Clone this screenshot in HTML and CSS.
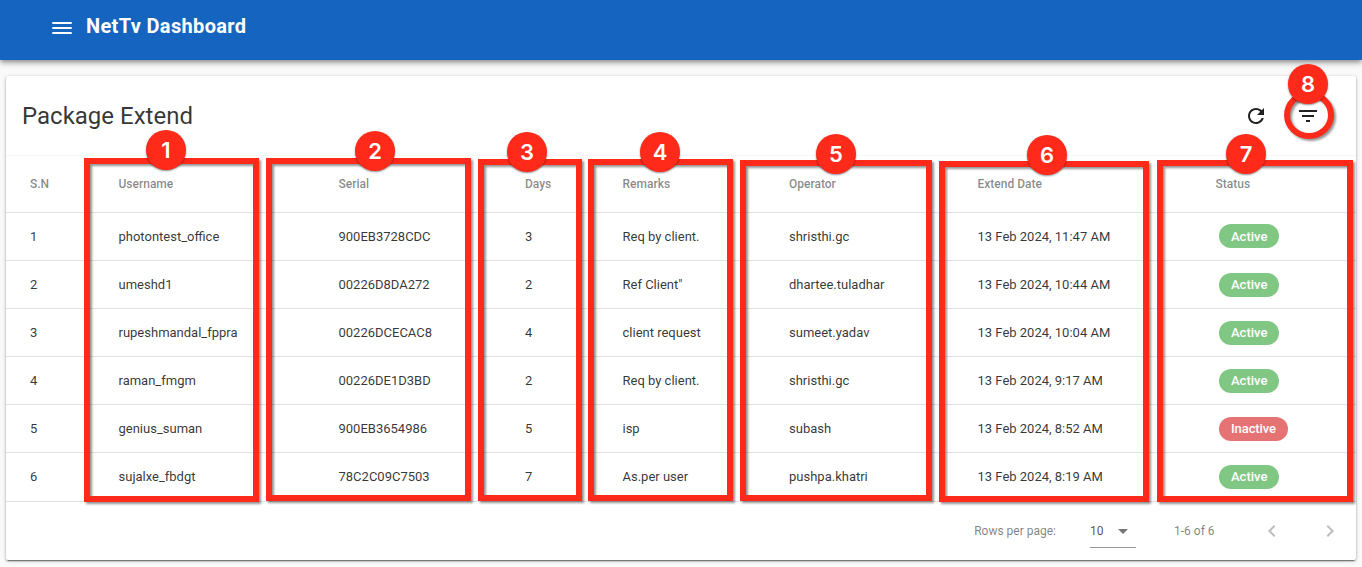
FILE: index.html
```html
<!DOCTYPE html>
<html lang="en">
<head>
<meta charset="utf-8">
<title>NetTv Dashboard</title>
<link rel="stylesheet" href="styles.css">
</head>
<body>
<header class="appbar">
  <svg class="menu" viewBox="0 0 24 24"><path d="M2.3 6h19.4v2H2.3zM2.3 11h19.4v2H2.3zM2.3 16h19.4v2H2.3z"/></svg>
  <h1 class="brand">NetTv Dashboard</h1>
</header>
<main class="card">
  <div class="toolbar">
    <h2 class="title">Package Extend</h2>
    <svg class="icon refresh" viewBox="0 0 24 24"><path d="M17.65 6.35C16.2 4.9 14.21 4 12 4c-4.42 0-7.99 3.58-7.99 8s3.57 8 7.99 8c3.73 0 6.84-2.55 7.73-6h-2.08c-.82 2.33-3.04 4-5.65 4-3.31 0-6-2.69-6-6s2.69-6 6-6c1.66 0 3.14.69 4.22 1.78L13 11h7V4l-2.35 2.35z"/></svg>
    <svg class="icon" viewBox="0 0 24 24"><path d="M10 18h4v-2h-4v2zM3 6v2h18V6H3zm3 7h12v-2H6v2z"/></svg>
  </div>
  <div class="row head"><span>S.N</span><span>Username</span><span>Serial</span><span>Days</span><span>Remarks</span><span>Operator</span><span>Extend Date</span><span>Status</span></div>
  <div class="row"><span>1</span><span>photontest_office</span><span>900EB3728CDC</span><span>3</span><span>Req by client.</span><span>shristhi.gc</span><span>13 Feb 2024, 11:47 AM</span><b class="chip first">Active</b></div>
  <div class="row"><span>2</span><span>umeshd1</span><span>00226D8DA272</span><span>2</span><span>Ref Client"</span><span>dhartee.tuladhar</span><span>13 Feb 2024, 10:44 AM</span><b class="chip">Active</b></div>
  <div class="row"><span>3</span><span>rupeshmandal_fppra</span><span>00226DCECAC8</span><span>4</span><span>client request</span><span>sumeet.yadav</span><span>13 Feb 2024, 10:04 AM</span><b class="chip">Active</b></div>
  <div class="row"><span>4</span><span>raman_fmgm</span><span>00226DE1D3BD</span><span>2</span><span>Req by client.</span><span>shristhi.gc</span><span>13 Feb 2024, 9:17 AM</span><b class="chip">Active</b></div>
  <div class="row"><span>5</span><span>genius_suman</span><span>900EB3654986</span><span>5</span><span>isp</span><span>subash</span><span>13 Feb 2024, 8:52 AM</span><b class="chip off">Inactive</b></div>
  <div class="row last"><span>6</span><span>sujalxe_fbdgt</span><span>78C2C09C7503</span><span>7</span><span>As.per user</span><span>pushpa.khatri</span><span>13 Feb 2024, 8:19 AM</span><b class="chip">Active</b></div>
  <div class="footer">
    <span class="label">Rows per page:</span>
    <div class="select"><span>10</span><svg viewBox="0 0 24 24"><path d="M7 10l5 5 5-5z"/></svg></div>
    <span class="range">1-6 of 6</span>
    <svg class="nav prev" viewBox="0 0 24 24"><path d="M15.41 7.41L14 6l-6 6 6 6 1.41-1.41L10.83 12z"/></svg>
    <svg class="nav" viewBox="0 0 24 24"><path d="M10 6L8.590 7.410 13.170 12l-4.580 4.590L10 18l6-6z"/></svg>
  </div>
</main>
<div class="mark m1"></div><div class="mark m2"></div><div class="mark m3"></div><div class="mark m4"></div><div class="mark m5"></div><div class="mark m6"></div><div class="mark m7"></div><div class="mark ring"></div>
<div class="pin p1">1</div><div class="pin p2">2</div><div class="pin p3">3</div><div class="pin p4">4</div><div class="pin p5">5</div><div class="pin p6">6</div><div class="pin p7">7</div><div class="pin p8">8</div>
</body>
</html>
```
FILE: styles.css
```css
* { box-sizing: border-box; }
body { margin: 0; height: 567px; overflow: hidden; position: relative; background: #fafafa; font-family: Roboto, sans-serif; color: rgba(0,0,0,.8); }
.appbar { height: 60px; background: #1565c0; color: #fff; display: flex; align-items: flex-start; padding-left: 50px; box-shadow: 0 2px 4px -1px rgba(0,0,0,.3), 0 4px 5px rgba(0,0,0,.16), 0 1px 10px rgba(0,0,0,.12); }
.menu { width: 24px; height: 24px; margin-top: 16px; fill: #fff; }
.brand { margin: 14px 0 0 12px; font-size: 20px; line-height: 24px; font-weight: 700; letter-spacing: .35px; }
.card { margin: 16px 6px 0; height: 484px; background: #fff; border-radius: 2px; box-shadow: 0 3px 1px -2px rgba(0,0,0,.3), 0 1px 2px rgba(0,0,0,.35), 0 1px 5px rgba(0,0,0,.14); }
.toolbar { height: 80px; display: flex; align-items: center; padding: 0 36px 0 16px; border-bottom: 1px solid #f6f6f6; }
.title { flex: 1; margin: 0; font-size: 24px; font-weight: 400; line-height: 32px; }
.icon { width: 24px; height: 24px; fill: #212121; }
.refresh { margin-right: 28px; }
.row { display: grid; grid-template-columns: 88.5px 220px 186.500px 97.500px 166.500px 188.500px 241.500px auto; align-items: center; height: 48px; padding-left: 24px; border-bottom: 1px solid #e0e0e0; font-size: 13px; white-space: nowrap; }
.row.last { border-bottom-color: transparent; }
.row.head { height: 57px; font-size: 12px; font-weight: 500; color: rgba(0,0,0,.48); }
.head span:last-child { margin-left: -3.5px; }
.chip { justify-self: start; height: 24px; padding: 0 12px; border-radius: 12px; background: #81c784; color: #fff; font-size: 13px; line-height: 24px; font-weight: 500; }
.chip.first { margin-bottom: 1px; line-height: 26px; }
.chip.off { background: #e57373; letter-spacing: -.1px; }
.footer { height: 59px; border-top: 1px solid #e0e0e0; display: flex; align-items: center; padding-right: 14px; justify-content: flex-end; font-size: 12px; color: rgba(0,0,0,.5); }
.label { margin-right: 34px; }
.select { width: 46px; height: 33px; margin-right: 38px; border-bottom: 1px solid #949494; display: flex; align-items: center; color: rgba(0,0,0,.7); }
.select span { width: 21px; }
.select svg { width: 24px; height: 24px; fill: #757575; }
.range { width: 86px; }
.nav { width: 24px; height: 24px; fill: #bdbdbd; }
.prev { margin-right: 34px; }
.mark { position: absolute; border: 6px solid #ff2a1a; filter: drop-shadow(2px 2px 1px rgba(0,0,0,.42)); }
.m1 { left: 84px; top: 158px; width: 175px; height: 344px; }
.m2 { left: 266px; top: 158px; width: 205px; height: 343px; }
.m3 { left: 478px; top: 159px; width: 104px; height: 342px; }
.m4 { left: 588px; top: 159px; width: 145px; height: 342px; }
.m5 { left: 740px; top: 160px; width: 192px; height: 341px; }
.m6 { left: 939px; top: 161px; width: 210px; height: 341px; }
.m7 { left: 1157px; top: 160px; width: 196px; height: 342px; }
.ring { left: 1284px; top: 91px; width: 50px; height: 48px; border-radius: 50%; }
.pin { position: absolute; width: 40px; height: 40px; border-radius: 50%; background: #ff2a1a; color: #fff; font: 600 22px/41px Inter, sans-serif; text-align: center; box-shadow: 0 1px 2px rgba(0,0,0,.45); }
.p1 { left: 146px; top: 130px; }
.p2 { left: 355px; top: 131px; }
.p3 { left: 507px; top: 132px; }
.p4 { left: 640px; top: 132px; }
.p5 { left: 816px; top: 134px; }
.p6 { left: 1027px; top: 135px; }
.p7 { left: 1226px; top: 134px; }
.p8 { left: 1288px; top: 64px; }
```
